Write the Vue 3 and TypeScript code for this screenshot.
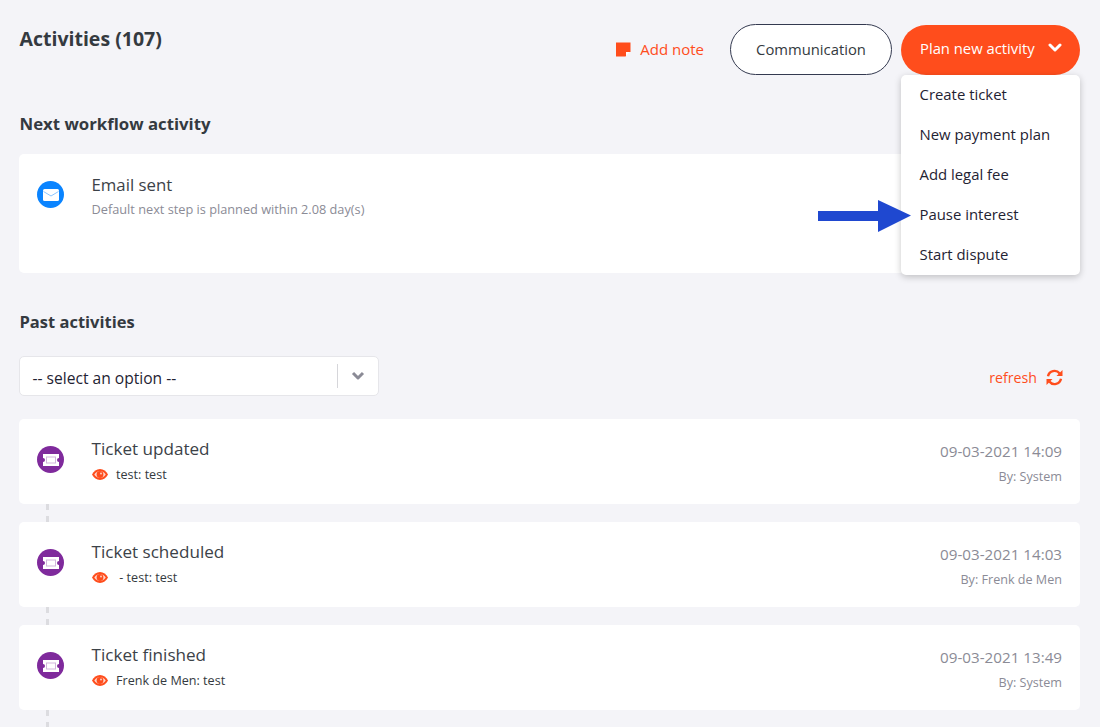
<script setup lang="ts">
interface Activity { title: string; detail: string; date: string; by: string }
const menu: string[] = ['Create ticket', 'New payment plan', 'Add legal fee', 'Pause interest', 'Start dispute']
const past: Activity[] = [
  { title: 'Ticket updated', detail: 'test: test', date: '09-03-2021 14:09', by: 'By: System' },
  { title: 'Ticket scheduled', detail: ' - test: test', date: '09-03-2021 14:03', by: 'By: Frenk de Men' },
  { title: 'Ticket finished', detail: 'Frenk de Men: test', date: '09-03-2021 13:49', by: 'By: System' }
]
</script>

<template>
  <div class="page">
    <header class="top">
      <h1 class="title">Activities (107)</h1>
      <div class="actions">
        <a class="note">
          <svg width="15" height="15" viewBox="0 0 15 15"><path d="M0 .5h14.500v9l-5 5H0z" fill="#ff4d1c"/><path d="M10 14.500v-4.500h4.500z" fill="#fff"/></svg>
          <span>Add note</span>
        </a>
        <button class="comm">Communication</button>
        <div class="plan-wrap">
          <button class="plan">
            <span>Plan new activity</span>
            <svg width="14" height="10" viewBox="0 0 14 10"><path d="M2 2l5 5 5-5" fill="none" stroke="#fff" stroke-width="3" stroke-linecap="round" stroke-linejoin="round"/></svg>
          </button>
          <ul class="menu">
            <li v-for="m in menu" :key="m">{{ m }}</li>
          </ul>
        </div>
      </div>
    </header>

    <h2 class="section first">Next workflow activity</h2>
    <section class="card next">
      <span class="dot blue">
        <svg width="16" height="12" viewBox="0 0 16 12"><rect width="16" height="12" rx="1.500" fill="#fff"/><path d="M.5 2.500L8 7l7.500-4.500" fill="none" stroke="#8cc6ff" stroke-width="1"/></svg>
      </span>
      <div class="body">
        <div class="name">Email sent</div>
        <div class="desc">Default next step is planned within 2.08 day(s)</div>
      </div>
    </section>

    <h2 class="section second">Past activities</h2>
    <div class="filters">
      <div class="select">
        <span class="sel-text">-- select an option --</span>
        <span class="sel-sep"></span>
        <svg width="14" height="10" viewBox="0 0 14 10"><path d="M2 2l5 5 5-5" fill="none" stroke="#8b8b96" stroke-width="3" stroke-linejoin="round"/></svg>
      </div>
      <a class="refresh">
        <span>refresh</span>
        <svg width="17" height="17" viewBox="0 0 17 17"><g fill="none" stroke="#ff4d1c" stroke-width="2.400"><path d="M2 7.200A6.600 6.600 0 0 1 13.700 4.500"/><path d="M15 9.800A6.600 6.600 0 0 1 3.300 12.500"/></g><path d="M16.500 1v6h-6z" fill="#ff4d1c"/><path d="M.5 16v-6h6z" fill="#ff4d1c"/></svg>
      </a>
    </div>

    <div class="list">
      <template v-for="a in past" :key="a.title">
        <article class="card row">
          <span class="dot purple">
            <svg width="18" height="12" viewBox="0 0 18 12"><path d="M1 0h16v4a2 2 0 0 0 0 4v4H1V8a2 2 0 0 0 0-4z" fill="#fff"/><rect x="4" y="2.500" width="10" height="7" fill="#7f2a9c" opacity=".35"/><rect x="5" y="3.500" width="8" height="5" fill="#fff"/></svg>
          </span>
          <div class="body">
            <div class="name ticket">{{ a.title }}</div>
            <div class="detail">
              <svg width="16" height="11" viewBox="0 0 16 11"><path d="M8 0C4.500 0 1.800 2.200 0 5.500 1.800 8.800 4.500 11 8 11s6.200-2.200 8-5.500C14.200 2.200 11.500 0 8 0z" fill="#ff4d1c"/><path d="M8 2C5.800 2 3.800 3.200 2.300 5.500 3.800 7.800 5.800 9 8 9s4.200-1.200 5.700-3.500C12.200 3.200 10.200 2 8 2z" fill="#ffd9cf"/><circle cx="8" cy="5.500" r="3.400" fill="#ff4d1c"/><circle cx="9" cy="4.500" r=".9" fill="#ffd9cf"/></svg>
              <span class="detail-text">{{ a.detail }}</span>
            </div>
          </div>
          <div class="meta">
            <div class="date">{{ a.date }}</div>
            <div class="by">{{ a.by }}</div>
          </div>
        </article>
        <div class="link"></div>
      </template>
    </div>

    <svg class="arrow" width="93" height="32" viewBox="0 0 93 32"><path d="M0 11h60V0l33 15.500L60 32V21H0z" fill="#1f48d0"/></svg>
  </div>
</template>

<style>
html, body { margin: 0; background: #f4f4f8; }
</style>

<style scoped>
.page {
  position: relative;
  box-sizing: border-box;
  width: 1100px;
  height: 727px;
  overflow: hidden;
  padding: 24px 20px 0 19px;
  background: #f4f4f8;
  color: #343a40;
  font-family: "Open Sans", "Noto Sans", sans-serif;
}
.top { display: flex; justify-content: space-between; align-items: flex-start; height: 50px; }
.title { margin: 3px 0 0 .5px; font-size: 19.500px; line-height: 24px; font-weight: 700; color: #343a40; }
.actions { display: flex; align-items: center; }
.note { display: flex; align-items: center; gap: 9px; margin-right: 26px; color: #ff4d1c; font-size: 15px; margin-top: -1px; }
.comm {
  box-sizing: border-box; width: 162px; height: 51px; margin-right: 9px; padding-bottom: 2px;
  border: 1px solid #343a50; border-radius: 26px; background: #fff;
  color: #343a40; font: 14.800px "Open Sans", sans-serif;
}
.plan-wrap { position: relative; }
.plan {
  display: flex; align-items: center; justify-content: space-between;
  box-sizing: border-box; width: 179px; height: 50px; padding: 0 18px 3px 19px;
  border: 0; border-radius: 25px; background: #ff4d1c; color: #fff;
  font: 14.800px "Open Sans", sans-serif;
}
.menu {
  position: absolute; top: 50px; left: 0; z-index: 2; width: 179px; height: 200px;
  box-sizing: border-box; margin: 0; padding: 0; list-style: none;
  background: #fff; border-radius: 5px; box-shadow: 0 2px 7px rgba(0,0,0,.22);
}
.menu li { height: 40px; padding-left: 18.500px; line-height: 38px; font-size: 14.900px; color: #1f2333; }
.section { margin: 0 0 0 .5px; line-height: 22px; font-weight: 700; color: #343a40; }
.first { margin-top: 39px; font-size: 16.800px; }
.second { margin-top: 38px; font-size: 16.500px; }
.card { display: flex; box-sizing: border-box; background: #fff; border-radius: 5px; width: 1061px; }
.next { height: 119px; margin-top: 19px; padding: 18px 18px 0 18px; }
.dot { display: flex; flex: none; align-items: center; justify-content: center; width: 27px; height: 27px; margin-top: 9px; border-radius: 50%; }
.blue { background: #0a84ff; }
.purple { background: #7f2a9c; }
.body { margin-left: 27.500px; flex: 1; }
.name { font-size: 16.800px; line-height: 26px; color: #3c4248; }
.ticket { font-size: 17.100px; }
.desc { margin-top: 2px; font-size: 12.750px; line-height: 18px; color: #8b8b96; }
.filters { display: flex; justify-content: space-between; align-items: center; height: 40px; margin-top: 23px; width: 1061px; }
.select {
  display: flex; align-items: center; box-sizing: border-box; width: 360px; height: 40px;
  padding: 0 13px 0 12.500px; background: #fff; border: 1px solid #e6e6ea; border-radius: 5px;
}
.sel-text { flex: 1; font-size: 15.600px; padding-top: 3px; color: #1f2333; }
.sel-sep { width: 1px; height: 24px; margin-right: 13px; background: #d6d6da; }
.refresh { display: flex; align-items: center; gap: 9px; margin: 2px 17px 0 0; color: #ff4d1c; font-size: 14.200px; }
.list { margin-top: 23px; }
.row { height: 85px; padding: 17px 18px 0 18px; }
.row .dot { margin-top: 10px; }
.detail { display: flex; align-items: center; margin-top: 3px; height: 18px; }
.detail-text { margin-left: 8.500px; font-size: 12.600px; white-space: pre; color: #343a40; }
.meta { text-align: right; }
.date { margin-top: 4px; font-size: 15.200px; line-height: 22px; color: #8b8b96; }
.by { margin-top: 6px; font-size: 12.600px; line-height: 18px; color: #8b8b96; }
.link { box-sizing: border-box; width: 3px; height: 18px; margin-left: 27px; background: repeating-linear-gradient(#dcdce0 0 6px, transparent 6px 12px); }
.arrow { position: absolute; left: 818px; top: 200px; z-index: 3; }
</style>
